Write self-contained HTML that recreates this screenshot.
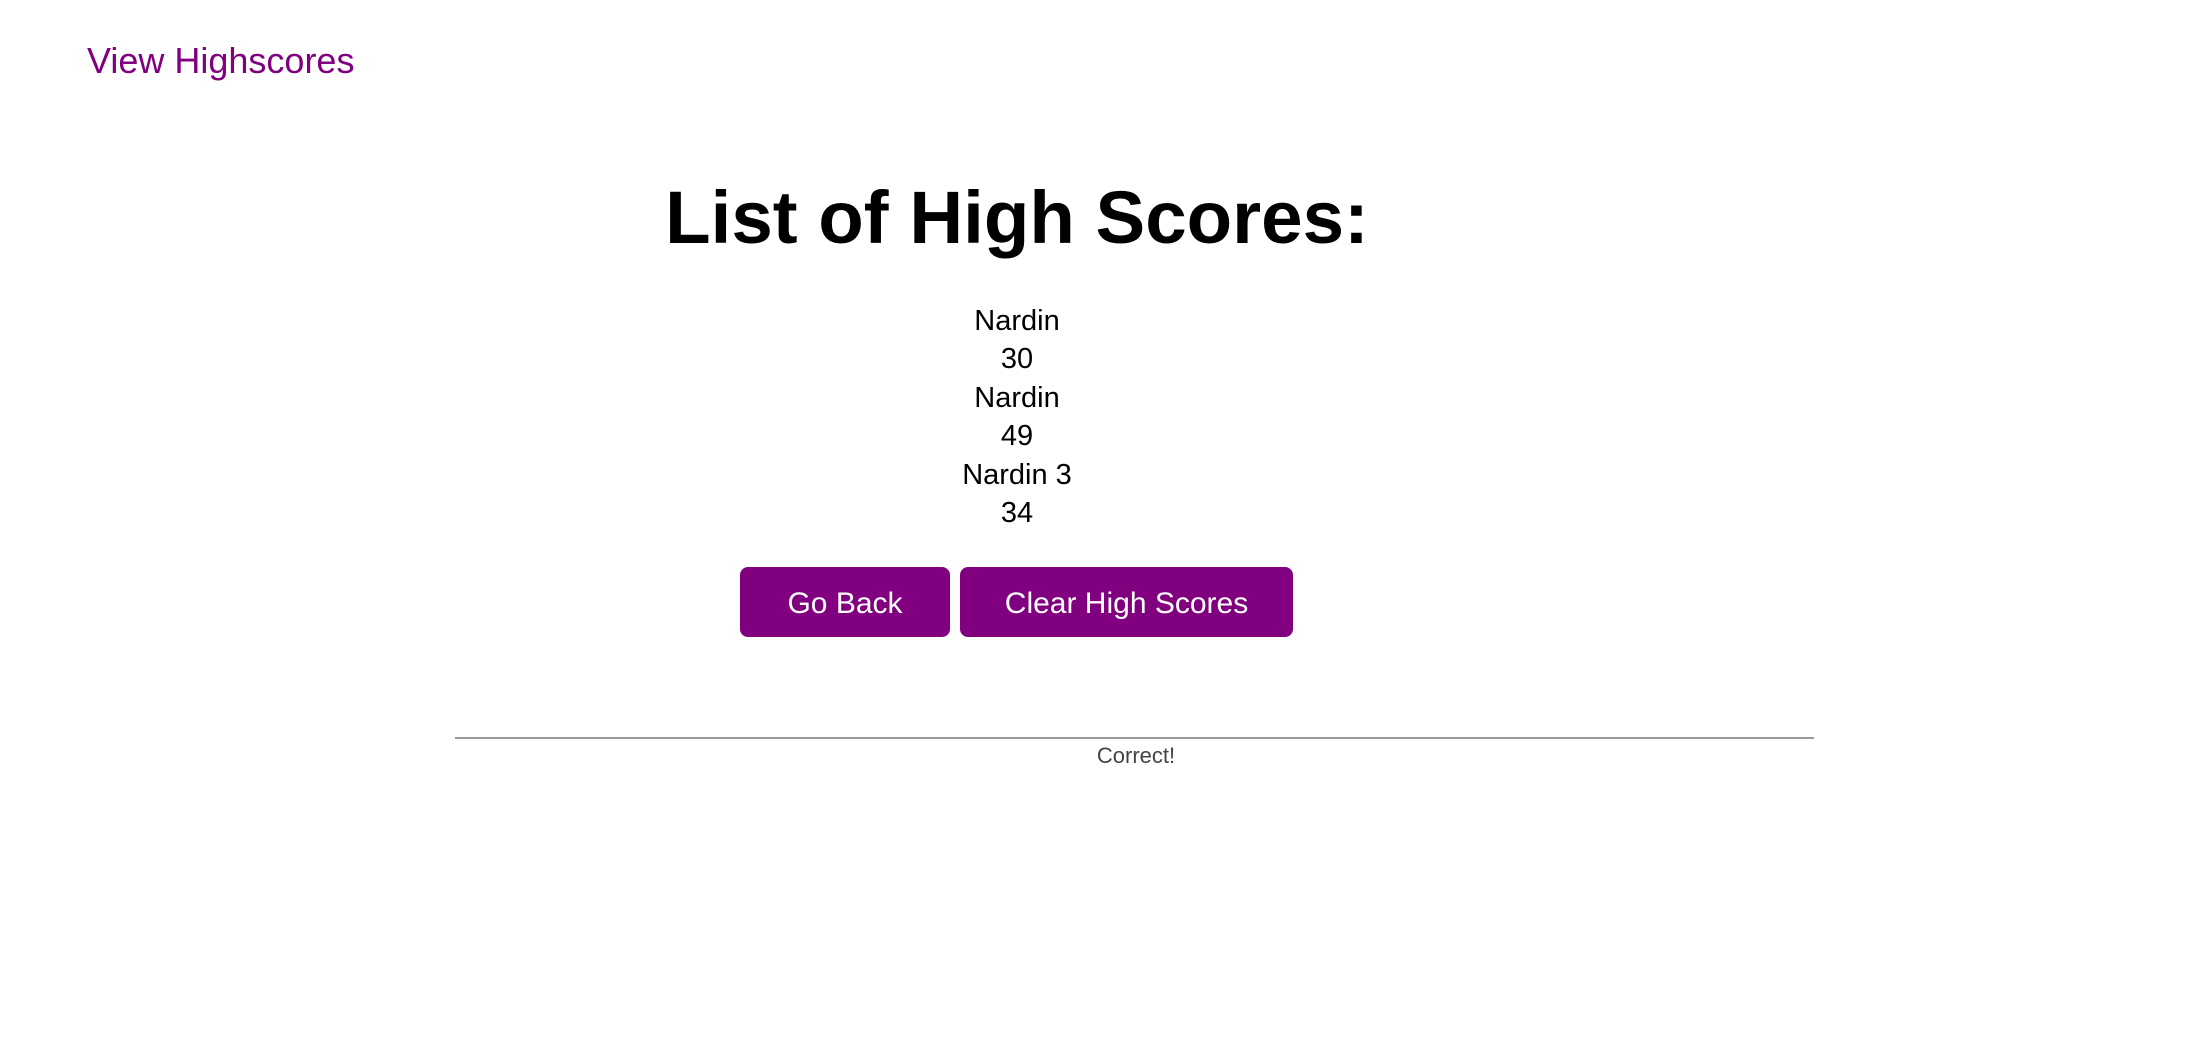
<!DOCTYPE html>
<html><head><meta charset="utf-8"><style>
html,body{margin:0;padding:0;background:#fff;width:2198px;height:1058px;overflow:hidden;font-family:"Liberation Sans",sans-serif;}
.a{position:absolute;white-space:nowrap;}
#vh{left:87px;top:38px;font-size:36px;line-height:46px;color:#800080;}
#title{left:0;width:2034px;text-align:center;top:180px;font-size:74.5px;line-height:76px;font-weight:bold;color:#000;}
#list{left:0;width:2034px;text-align:center;top:302px;font-size:29px;line-height:38.4px;color:#000;}
.btn{position:absolute;top:567px;height:70px;background:#800080;color:#fff;border-radius:8px;font-size:30px;line-height:67px;padding-top:3px;box-sizing:border-box;text-align:center;}
#line{left:455px;top:737px;width:1359px;height:2px;background:#999;}
#cor{left:0;width:2272px;text-align:center;top:742px;font-size:22px;line-height:28px;color:#444;}
</style></head><body>
<div class="a" id="vh">View Highscores</div>
<div class="a" id="title">List of High Scores:</div>
<div class="a" id="list"><div>Nardin</div><div>30</div><div>Nardin</div><div>49</div><div>Nardin 3</div><div>34</div></div>
<div class="btn" style="left:740px;width:210px;">Go Back</div>
<div class="btn" style="left:960px;width:333px;">Clear High Scores</div>
<div class="a" id="line"></div>
<div class="a" id="cor">Correct!</div>
</body></html>
